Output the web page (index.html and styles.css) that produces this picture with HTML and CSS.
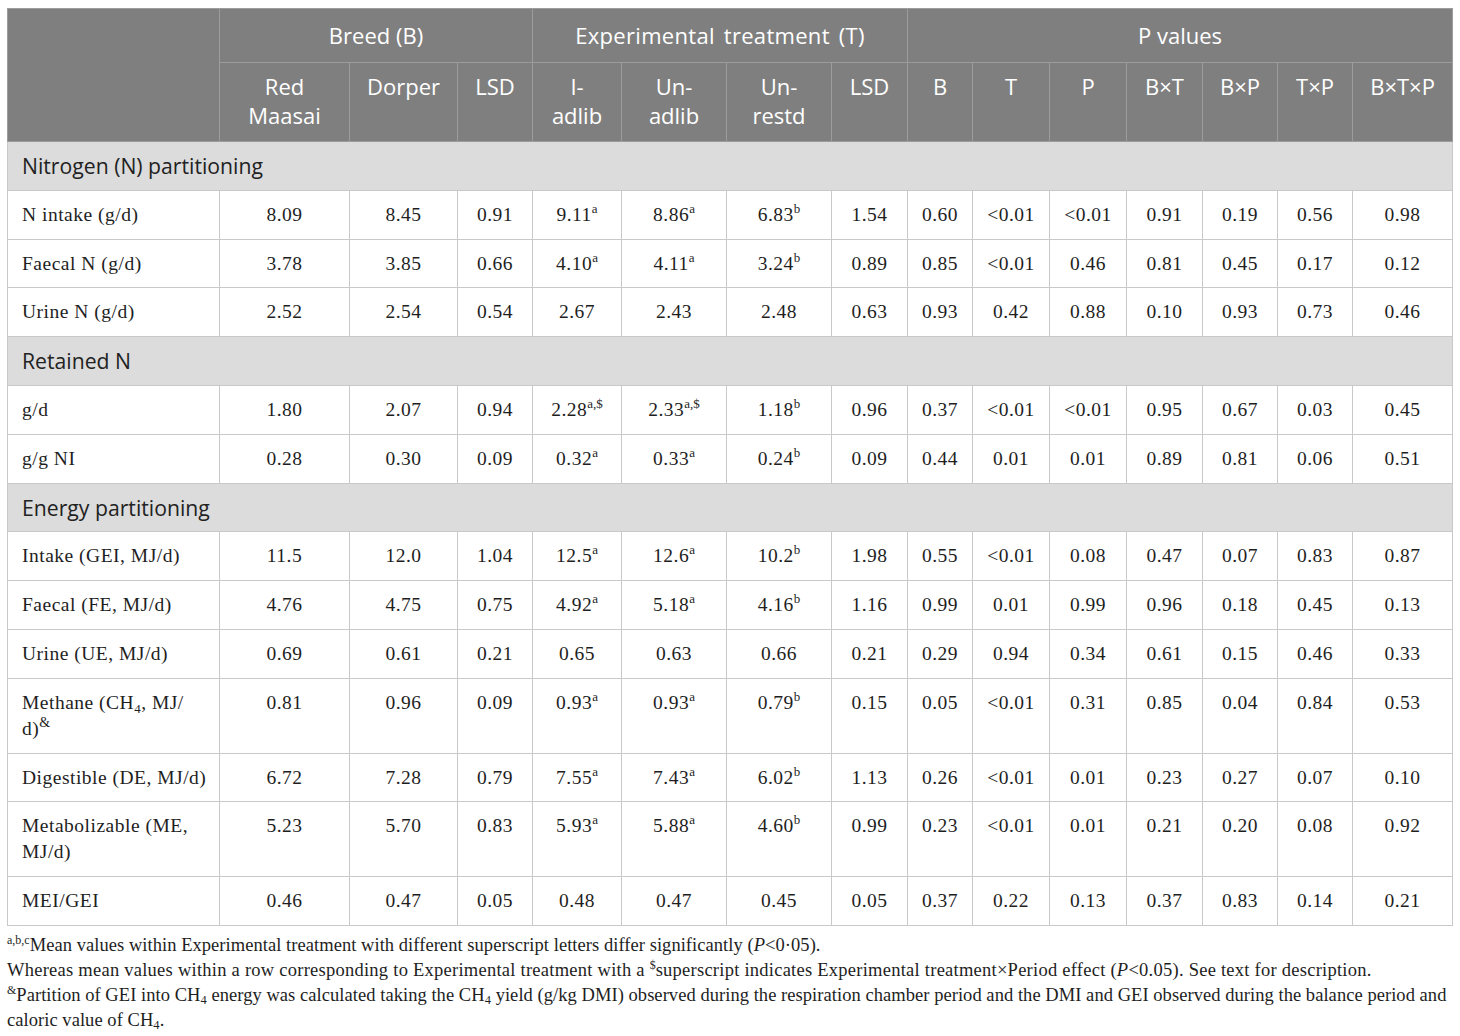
FILE: index.html
```html
<!DOCTYPE html>
<html lang="en">
<head>
<meta charset="utf-8">
<title>Table</title>
<link rel="stylesheet" href="styles.css">
</head>
<body>
<div class="wrap">
<table class="data">
  <colgroup>
    <col style="width:212px"><col style="width:130px"><col style="width:108px"><col style="width:75px">
    <col style="width:89px"><col style="width:105px"><col style="width:105px"><col style="width:76px">
    <col style="width:65px"><col style="width:77px"><col style="width:77px"><col style="width:76px">
    <col style="width:75px"><col style="width:75px"><col style="width:100px">
  </colgroup>
  <thead>
    <tr class="h1">
      <th rowspan="2"></th>
      <th colspan="3">Breed (B)</th>
      <th colspan="4">Experimental treatment (T)</th>
      <th colspan="7">P values</th>
    </tr>
    <tr class="h2">
      <th>Red<br>Maasai</th><th>Dorper</th><th>LSD</th>
      <th>I-<br>adlib</th><th>Un-<br>adlib</th><th>Un-<br>restd</th><th>LSD</th>
      <th>B</th><th>T</th><th>P</th><th>B×T</th><th>B×P</th><th>T×P</th><th>B×T×P</th>
    </tr>
  </thead>
  <tbody>
    <tr class="sec"><td colspan="15">Nitrogen (N) partitioning</td></tr>
    <tr><td>N intake (g/d)</td><td>8.09</td><td>8.45</td><td>0.91</td><td>9.11<sup>a</sup></td><td>8.86<sup>a</sup></td><td>6.83<sup>b</sup></td><td>1.54</td><td>0.60</td><td>&lt;0.01</td><td>&lt;0.01</td><td>0.91</td><td>0.19</td><td>0.56</td><td>0.98</td></tr>
    <tr><td>Faecal N (g/d)</td><td>3.78</td><td>3.85</td><td>0.66</td><td>4.10<sup>a</sup></td><td>4.11<sup>a</sup></td><td>3.24<sup>b</sup></td><td>0.89</td><td>0.85</td><td>&lt;0.01</td><td>0.46</td><td>0.81</td><td>0.45</td><td>0.17</td><td>0.12</td></tr>
    <tr><td>Urine N (g/d)</td><td>2.52</td><td>2.54</td><td>0.54</td><td>2.67</td><td>2.43</td><td>2.48</td><td>0.63</td><td>0.93</td><td>0.42</td><td>0.88</td><td>0.10</td><td>0.93</td><td>0.73</td><td>0.46</td></tr>
    <tr class="sec"><td colspan="15">Retained N</td></tr>
    <tr><td>g/d</td><td>1.80</td><td>2.07</td><td>0.94</td><td>2.28<sup>a,$</sup></td><td>2.33<sup>a,$</sup></td><td>1.18<sup>b</sup></td><td>0.96</td><td>0.37</td><td>&lt;0.01</td><td>&lt;0.01</td><td>0.95</td><td>0.67</td><td>0.03</td><td>0.45</td></tr>
    <tr><td>g/g NI</td><td>0.28</td><td>0.30</td><td>0.09</td><td>0.32<sup>a</sup></td><td>0.33<sup>a</sup></td><td>0.24<sup>b</sup></td><td>0.09</td><td>0.44</td><td>0.01</td><td>0.01</td><td>0.89</td><td>0.81</td><td>0.06</td><td>0.51</td></tr>
    <tr class="sec"><td colspan="15">Energy partitioning</td></tr>
    <tr><td>Intake (GEI, MJ/d)</td><td>11.5</td><td>12.0</td><td>1.04</td><td>12.5<sup>a</sup></td><td>12.6<sup>a</sup></td><td>10.2<sup>b</sup></td><td>1.98</td><td>0.55</td><td>&lt;0.01</td><td>0.08</td><td>0.47</td><td>0.07</td><td>0.83</td><td>0.87</td></tr>
    <tr><td>Faecal (FE, MJ/d)</td><td>4.76</td><td>4.75</td><td>0.75</td><td>4.92<sup>a</sup></td><td>5.18<sup>a</sup></td><td>4.16<sup>b</sup></td><td>1.16</td><td>0.99</td><td>0.01</td><td>0.99</td><td>0.96</td><td>0.18</td><td>0.45</td><td>0.13</td></tr>
    <tr><td>Urine (UE, MJ/d)</td><td>0.69</td><td>0.61</td><td>0.21</td><td>0.65</td><td>0.63</td><td>0.66</td><td>0.21</td><td>0.29</td><td>0.94</td><td>0.34</td><td>0.61</td><td>0.15</td><td>0.46</td><td>0.33</td></tr>
    <tr><td>Methane (CH<sub>4</sub>, MJ/<br>d)<sup class="amp">&amp;</sup></td><td>0.81</td><td>0.96</td><td>0.09</td><td>0.93<sup>a</sup></td><td>0.93<sup>a</sup></td><td>0.79<sup>b</sup></td><td>0.15</td><td>0.05</td><td>&lt;0.01</td><td>0.31</td><td>0.85</td><td>0.04</td><td>0.84</td><td>0.53</td></tr>
    <tr><td>Digestible (DE, MJ/d)</td><td>6.72</td><td>7.28</td><td>0.79</td><td>7.55<sup>a</sup></td><td>7.43<sup>a</sup></td><td>6.02<sup>b</sup></td><td>1.13</td><td>0.26</td><td>&lt;0.01</td><td>0.01</td><td>0.23</td><td>0.27</td><td>0.07</td><td>0.10</td></tr>
    <tr><td>Metabolizable (ME,<br>MJ/d)</td><td>5.23</td><td>5.70</td><td>0.83</td><td>5.93<sup>a</sup></td><td>5.88<sup>a</sup></td><td>4.60<sup>b</sup></td><td>0.99</td><td>0.23</td><td>&lt;0.01</td><td>0.01</td><td>0.21</td><td>0.20</td><td>0.08</td><td>0.92</td></tr>
    <tr><td>MEI/GEI</td><td>0.46</td><td>0.47</td><td>0.05</td><td>0.48</td><td>0.47</td><td>0.45</td><td>0.05</td><td>0.37</td><td>0.22</td><td>0.13</td><td>0.37</td><td>0.83</td><td>0.14</td><td>0.21</td></tr>
  </tbody>
</table>
<div class="notes">
  <p><sup>a,b,c</sup>Mean values within Experimental treatment with different superscript letters differ significantly (<i>P</i>&lt;0·05).</p>
  <p>Whereas mean values within a row corresponding to Experimental treatment with a <sup>$</sup>superscript indicates Experimental treatment×Period effect (<i>P</i>&lt;0.05). See text for description.</p>
  <p><sup>&amp;</sup>Partition of GEI into CH<sub>4</sub> energy was calculated taking the CH<sub>4</sub> yield (g/kg DMI) observed during the respiration chamber period and the DMI and GEI observed during the balance period and caloric value of CH<sub>4</sub>.</p>
</div>
</div>
</body>
</html>
```
FILE: styles.css
```css
html, body {
  margin: 0;
  padding: 0;
  background: #ffffff;
}
.wrap {
  padding: 8px 8px 0 7px;
  width: 1446px;
}
.data {
  border-collapse: collapse;
  table-layout: fixed;
  width: 1446px;
  font-family: "Liberation Serif", "Times New Roman", serif;
  font-size: 19.5px;
  color: #1e1e1e;
  letter-spacing: 0.5px;
}
.data th {
  background: #7f7f7f;
  color: #ffffff;
  font-family: "Open Sans", "Noto Sans", sans-serif;
  font-weight: 400;
  font-size: 22px;
  letter-spacing: 0;
  line-height: 29px;
  text-align: center;
  vertical-align: top;
  border: 1px solid #9c9c9c;
}
.data tr.h1 th {
  padding: 12px 4px 12px;
  vertical-align: middle;
}
.data tr.h1 th:nth-child(3) {
  word-spacing: 3px;
  letter-spacing: 0.3px;
}
.data tr.h2 th {
  padding: 9px 2px 11px;
}
.data td {
  border: 1px solid #c9c9c9;
  padding: 11px 4px 10.8px;
  line-height: 26px;
  text-align: center;
  vertical-align: top;
}
.data td:first-child {
  text-align: left;
  padding-left: 14px;
}
.data tr.sec td {
  background: #dcdcdc;
  font-family: "Open Sans", "Noto Sans", sans-serif;
  font-size: 21.2px;
  letter-spacing: 0;
  color: #222222;
}
.data sup {
  font-size: 13px;
  line-height: 0;
  vertical-align: 8px;
  letter-spacing: 0;
}
.data sub {
  font-size: 13px;
  line-height: 0;
  vertical-align: -4px;
}
.data sup.amp {
  font-size: 14px;
}
.notes {
  margin-top: 7px;
  font-family: "Liberation Serif", "Times New Roman", serif;
  font-size: 18.5px;
  line-height: 25px;
  color: #1e1e1e;
  letter-spacing: 0.05px;
}
.notes p {
  margin: 0;
}
.notes p:nth-child(2) {
  letter-spacing: 0.25px;
}
.notes sup {
  font-size: 12px;
  line-height: 0;
  vertical-align: 7px;
  letter-spacing: 0;
}
.notes sub {
  font-size: 12.5px;
  line-height: 0;
  vertical-align: -3px;
}
```
